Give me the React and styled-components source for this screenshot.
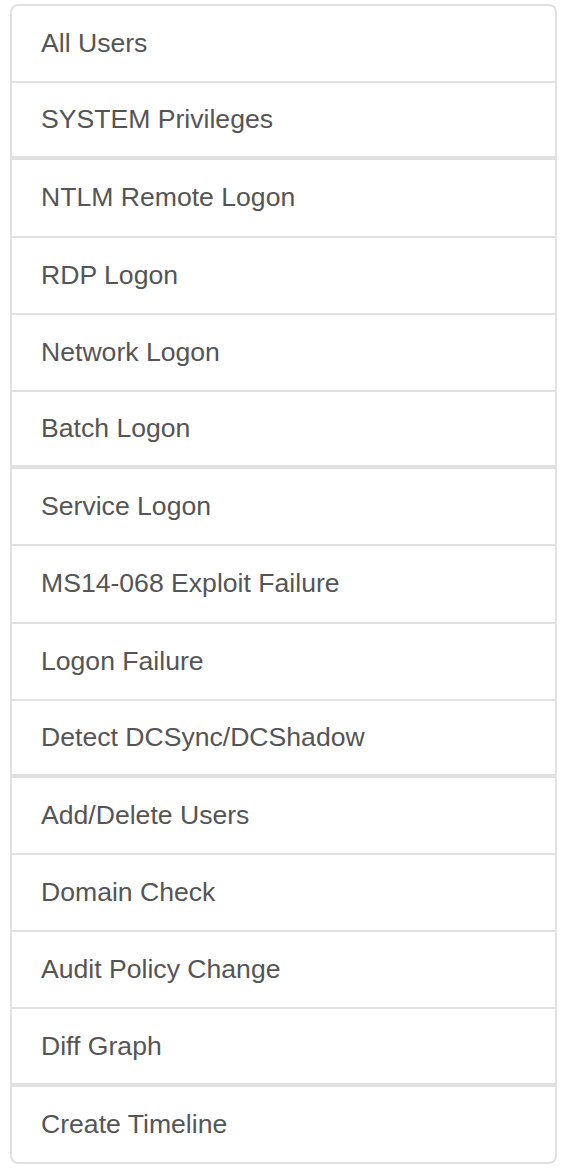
import styled, { createGlobalStyle } from "styled-components";

const Global = createGlobalStyle`
body {
  margin: 0;
  background: #fff;
  font-family: "Liberation Sans", Arial, Helvetica, sans-serif;
}
`;

const List = styled.div`
margin: 4px 11px 0 10px;
display: flex;
flex-direction: column;
`;

const Item = styled.div`
box-sizing: border-box;
height: 79.2px;
margin-bottom: -2px;
display: flex;
align-items: center;
padding: 0 29px 0;
background: #fff;
border: 2px solid #e1e1e1;
border-bottom-width: ${(p) => (p.$thick ? "4px" : "2px")};
color: #555;
font-size: 26.6px;
cursor: pointer;

&:first-child {
  border-top-left-radius: 8px;
  border-top-right-radius: 8px;
}
&:last-child {
  margin-bottom: 0;
  border-bottom-left-radius: 8px;
  border-bottom-right-radius: 8px;
}
`;

const items = [
  "All Users",
  "SYSTEM Privileges",
  "NTLM Remote Logon",
  "RDP Logon",
  "Network Logon",
  "Batch Logon",
  "Service Logon",
  "MS14-068 Exploit Failure",
  "Logon Failure",
  "Detect DCSync/DCShadow",
  "Add/Delete Users",
  "Domain Check",
  "Audit Policy Change",
  "Diff Graph",
  "Create Timeline",
];

const App = () => {
  return (
    <>
      <Global />
      <List>
        {items.map((t, i) => (
          <Item key={t} $thick={i % 4 === 1 && i < 14}>
            {t}
          </Item>
        ))}
      </List>
    </>
  );
};

export default App;
